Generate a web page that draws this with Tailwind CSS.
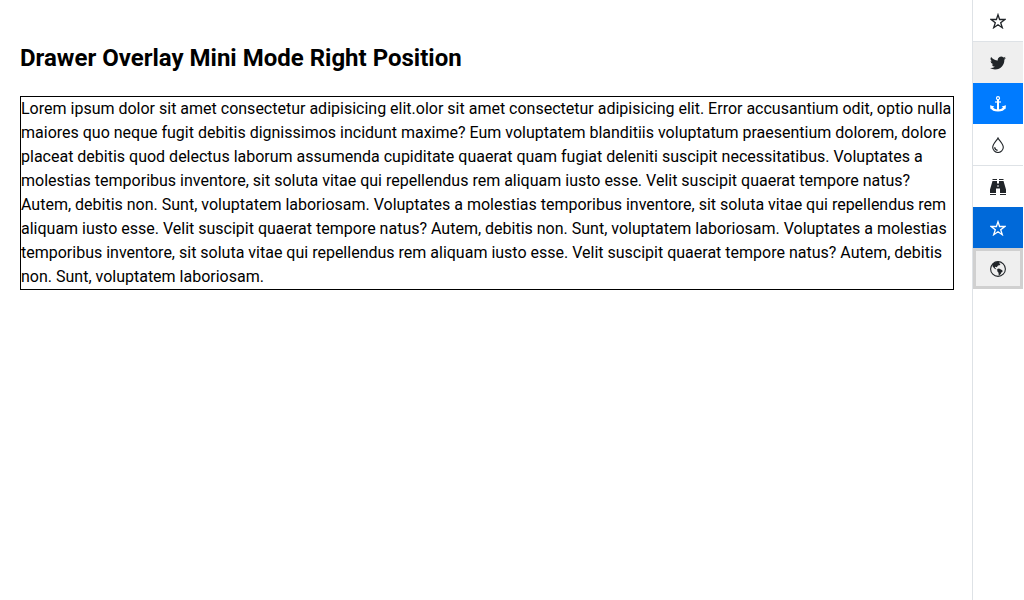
<!DOCTYPE html>
<html lang="en">
<head>
<meta charset="utf-8">
<meta name="viewport" content="width=device-width, initial-scale=1">
<title>Drawer Overlay Mini Mode Right Position</title>
<script src="https://cdn.jsdelivr.net/npm/@tailwindcss/browser@4"></script>
</head>
<body class="flex min-h-screen bg-white font-[Roboto,sans-serif] text-black">
<main class="min-w-0 flex-1 pt-11 pr-[18px] pl-5">
  <h2 class="mb-6 text-2xl leading-7 font-bold">Drawer Overlay Mini Mode Right Position</h2>
  <p class="border border-black text-base leading-6">Lorem ipsum dolor sit amet consectetur adipisicing elit.olor sit amet consectetur adipisicing elit. Error accusantium odit, optio nulla maiores quo neque fugit debitis dignissimos incidunt maxime? Eum voluptatem blanditiis voluptatum praesentium dolorem, dolore placeat debitis quod delectus laborum assumenda cupiditate quaerat quam fugiat deleniti suscipit necessitatibus. Voluptates a molestias temporibus inventore, sit soluta vitae qui repellendus rem aliquam iusto esse. Velit suscipit quaerat tempore natus? Autem, debitis non. Sunt, voluptatem laboriosam. Voluptates a molestias temporibus inventore, sit soluta vitae qui repellendus rem aliquam iusto esse. Velit suscipit quaerat tempore natus? Autem, debitis non. Sunt, voluptatem laboriosam. Voluptates a molestias temporibus inventore, sit soluta vitae qui repellendus rem aliquam iusto esse. Velit suscipit quaerat tempore natus? Autem, debitis non. Sunt, voluptatem laboriosam.</p>
</main>
<aside class="w-[52px] shrink-0 border-l border-[#dee2e6] pr-px text-[#212529]">
  <nav class="flex flex-col" aria-label="Drawer">
    <button type="button" aria-label="Favourites" class="flex h-[42px] items-center justify-center border-b border-[#dee2e6]">
      <svg class="size-4" viewBox="0 0 16 16" fill="none" stroke="currentColor" stroke-width="1.3"><path d="M8 1.700 9.600 6.500h5.300l-4.200 3.200 1.600 5L8 11.700 3.700 14.700l1.600-5L1.100 6.500h5.300Z"/></svg>
    </button>
    <button type="button" aria-label="Twitter" class="flex h-[41px] items-center justify-center bg-[#efefef]">
      <svg class="size-4" viewBox="0 0 24 24" fill="currentColor"><path d="M24 4.6a10 10 0 0 1-2.8.8 5 5 0 0 0 2.1-2.7 10 10 0 0 1-3.1 1.2 4.9 4.9 0 0 0-8.4 4.5A14 14 0 0 1 1.7 3.1a4.9 4.9 0 0 0 1.500 6.600 5 5 0 0 1-2.200-.6v.1a4.900 4.900 0 0 0 3.900 4.800 5 5 0 0 1-2.200.1 4.900 4.900 0 0 0 4.600 3.400A10 10 0 0 1 0 19.500a14 14 0 0 0 7.500 2.200c9.100 0 14-7.500 14-14V7A10 10 0 0 0 24 4.600Z"/></svg>
    </button>
    <button type="button" aria-label="Anchor" class="flex h-[41px] items-center justify-center bg-[#007bff] text-white">
      <svg class="size-4" viewBox="0 0 16 16" fill="none" stroke="currentColor"><circle cx="8" cy="2.200" r="1.500" stroke-width="1.200"/><path d="M8 3.800V14" stroke-width="2"/><path d="M5 6h6" stroke-width="1.200"/><path d="M1.500 11.200c1 2 3.200 3.200 6.500 3.200s5.500-1.200 6.500-3.200" stroke-width="2.400"/><path d="M0 9.200 4.300 10.500.6 13.200ZM16 9.200l-4.300 1.300L15.400 13.200Z" fill="currentColor" stroke="none"/></svg>
    </button>
    <button type="button" aria-label="Droplet" class="flex h-[42px] items-center justify-center border-b border-[#dee2e6]">
      <svg class="size-4" viewBox="0 0 16 16" fill="none" stroke="currentColor" stroke-width="1.1"><path d="M8 .9C6.700 3.700 2.700 6.900 2.700 10.200a5.300 5.300 0 0 0 10.600 0C13.300 6.900 9.300 3.700 8 .9Z"/><path d="M4.700 10.200c.1 1.700 1.200 2.900 2.900 3.100" stroke-width="1.300"/></svg>
    </button>
    <button type="button" aria-label="Binoculars" class="flex h-[41px] items-center justify-center">
      <svg class="size-4" viewBox="0 0 16 16" fill="currentColor"><path d="M2.500 0H7v1H2.500ZM9 0h4.500v1H9ZM2.500 2H7v2.500h2V2h4.500L16 10.500V14h-6V9.500H6V14H0v-3.500ZM0 15h6v1H0ZM10 15h6v1h-6Z"/><path d="M7.500 6h1v2h-1Z" fill="white"/></svg>
    </button>
    <button type="button" aria-label="Starred" class="flex h-[41px] items-center justify-center bg-[#0069d9] text-white">
      <svg class="size-4" viewBox="0 0 16 16" fill="none" stroke="currentColor" stroke-width="1.3"><path d="M8 1.700 9.600 6.500h5.300l-4.200 3.200 1.600 5L8 11.700 3.700 14.700l1.600-5L1.100 6.500h5.300Z"/></svg>
    </button>
    <button type="button" aria-label="Globe" class="flex h-[41px] items-center justify-center border-3 border-[#d0d0d0] bg-[#efefef]">
      <svg class="size-4" viewBox="0 0 16 16"><circle cx="8" cy="8" r="7.400" fill="none" stroke="currentColor" stroke-width="1.100"/><path fill="currentColor" d="M2.200 3.300C4 1.200 6.600.3 9.600.9L8.800 2l1.700.9-.9 1.300-1.600.4-1.200 1.600-1.500-.5-.5.9 1 .8.700 1.200-1.800-.9L2.600 5.500Z"/><path fill="currentColor" d="M7.200 7.900l1.800-.3 3.300 1.600.3 1.200-1.500 1.300-.4 1.300-1.900 1.700-.3-3-1.200-1.500Z"/></svg>
    </button>
  </nav>
</aside>
</body>
</html>
